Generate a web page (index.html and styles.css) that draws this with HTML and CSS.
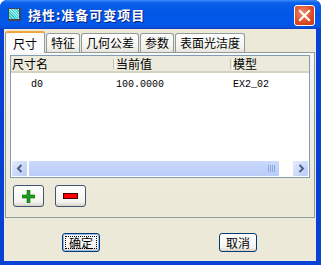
FILE: index.html
```html
<!DOCTYPE html>
<html lang="zh">
<head>
    <meta charset="UTF-8">
    <title>挠性:准备可变项目</title>
    <link rel="stylesheet" href="styles.css">
</head>
<body>

    <div class="window">
        <!-- Title bar -->
        <div class="titlebar">
            <span class="app-icon"></span>
            <span class="title">挠性:准备可变项目</span>
            <span class="close-btn">
                <svg width="13" height="13" viewBox="0 0 13 13">
                    <path d="M2 2 L11 11 M11 2 L2 11" stroke="#fff" stroke-width="2.2" stroke-linecap="square"/>
                </svg>
            </span>
        </div>

        <div class="frame">
            <!-- Tabs -->
            <div class="tabs">
                <div class="tab active">尺寸</div>
                <div class="tab">特征</div>
                <div class="tab">几何公差</div>
                <div class="tab">参数</div>
                <div class="tab">表面光洁度</div>
            </div>

            <div class="panel">
                <div class="list">
                    <div class="list-head">
                        <div class="col c1">尺寸名</div>
                        <div class="col c2"><span class="sep"></span>当前值</div>
                        <div class="col c3"><span class="sep"></span>模型</div>
                    </div>
                    <div class="list-row">
                        <div class="col c1 indent">d0</div>
                        <div class="col c2">100.0000</div>
                        <div class="col c3">EX2_02</div>
                    </div>
                    <div class="list-body"></div>
                    <div class="hscroll">
                        <div class="sb-btn">
                            <svg width="8" height="9" viewBox="0 0 8 9"><path d="M5.5 1 L2 4.5 L5.5 8" stroke="#4D6185" stroke-width="2" fill="none"/></svg>
                        </div>
                        <div class="sb-thumb"><span class="grip"></span></div>
                        <div class="sb-track"></div>
                        <div class="sb-btn">
                            <svg width="8" height="9" viewBox="0 0 8 9"><path d="M2.5 1 L6 4.5 L2.5 8" stroke="#4D6185" stroke-width="2" fill="none"/></svg>
                        </div>
                    </div>
                </div>

                <div class="tool-buttons">
                    <div class="btn icon-btn">
                        <svg width="13" height="13" viewBox="0 0 13 13">
                            <path d="M5 0h3v5h5v3H8v5H5V8H0V5h5z" fill="#1E9C1E"/>
                            <path d="M5 0h3v5h5v3H8v5H5V8H0V5h5z" fill="none" stroke="#0C6A0C" stroke-width="0.6"/>
                        </svg>
                    </div>
                    <div class="btn icon-btn">
                        <svg width="15" height="6" viewBox="0 0 15 6">
                            <rect x="0.5" y="0.5" width="14" height="5" fill="#F00" stroke="#400" stroke-width="1"/>
                        </svg>
                    </div>
                </div>
            </div>

            <div class="footer">
                <div class="btn text-btn default"><span class="focus">确定</span></div>
                <div class="btn text-btn">取消</div>
            </div>
        </div>
    </div>

</body>
</html>
```

FILE: styles.css
```css
/* Window frame */
body {
    margin: 0;
    padding: 0;
    background: #fff;
    font-family: "Noto Sans CJK SC", "Liberation Sans", sans-serif;
    font-size: 12px;
    color: #000;
}

.window {
    width: 321px;
    height: 265px;
    display: flex;
    flex-direction: column;
    background: #0842D4;
    border-radius: 7px 7px 0 0;
    overflow: hidden;
}

.titlebar {
    height: 29px;
    flex: none;
    display: flex;
    align-items: center;
    padding: 0 6px 0 8px;
    background: linear-gradient(#3C8CF8 0%, #0A5FEC 10%, #0156E6 45%, #0158EC 85%, #0A4ED6 95%, #0A3EC2 100%);
}

.app-icon {
    width: 10px;
    height: 10px;
    background: repeating-linear-gradient(45deg, #3CC 0 1px, #9EE 1px 2px);
    border: 1px solid #445;
    border-right-width: 2px;
    border-bottom-width: 2px;
    margin-right: 7px;
}

.title {
    flex: 1;
    color: #fff;
    font-weight: bold;
    font-size: 13px;
    letter-spacing: 1px;
    text-shadow: 1px 1px #0A1E7A;
}

.close-btn {
    width: 19px;
    height: 19px;
    border: 1px solid #fff;
    border-radius: 3px;
    background: radial-gradient(circle at 40% 35%, #F0896A, #DE4A22 60%, #C23A14);
    display: flex;
    align-items: center;
    justify-content: center;
    margin-top: 1px;
}

.frame {
    flex: 1;
    margin: 0 5px 4px 4px;
    background: #ECE9D8;
    display: flex;
    flex-direction: column;
    padding: 2px 1px 0 1px;
}

/* Tabs */
.tabs {
    display: flex;
    align-items: flex-end;
    height: 21px;
    padding-left: 2px;
    position: relative;
    z-index: 1;
}

.tab {
    height: 18px;
    line-height: 18px;
    padding: 0 4px;
    margin-right: 1px;
    border: 1px solid #919B9C;
    border-bottom: none;
    border-radius: 3px 3px 0 0;
    background: linear-gradient(#FEFEFE, #F4F3EE 70%, #E6E4DB);
    font-size: 12px;
}

.tab.active {
    height: 20px;
    line-height: 21px;
    margin-left: -2px;
    padding: 0 7px;
    background: #FCFCFE;
    border-top: 2px solid #F2A33A;
    border-radius: 3px 3px 0 0;
    margin-bottom: -1px;
}

.panel {
    height: 162px;
    border: 1px solid #919B9C;
    border-right-color: #8E9CA4;
    background: linear-gradient(#F8F8F4, #ECE9D8 85%);
    padding: 2px 4px 0 4px;
}

/* List view */
.list {
    height: 121px;
    border: 1px solid #7F9DB9;
    background: #fff;
    display: flex;
    flex-direction: column;
}

.list-head {
    height: 15px;
    display: flex;
    background: #EBEADB;
    border-bottom: 2px solid #D6D2C2;
    line-height: 15px;
}

.list-row {
    display: flex;
    height: 18px;
    line-height: 18px;
    margin-top: 3px;
    font-family: "Liberation Mono", monospace;
    font-size: 10px;
}

.col {
    position: relative;
    white-space: nowrap;
}

.c1 {
    width: 104px;
    padding-left: 1px;
}

.c2 {
    width: 117px;
}

.c3 {
    flex: 1;
}

.indent {
    padding-left: 20px;
    width: 85px;
}

.sep {
    position: absolute;
    left: -3px;
    top: 3px;
    width: 1px;
    height: 10px;
    border-left: 1px solid #C7C5B2;
    border-right: 1px solid #fff;
}

.list-body {
    flex: 1;
}

.hscroll {
    height: 17px;
    display: flex;
    background: #FEFEFB;
}

.sb-btn {
    width: 15px;
    height: 15px;
    border: 1px solid #fff;
    border-radius: 2px;
    background: linear-gradient(135deg, #E3EBFD, #BACBF7);
    display: flex;
    align-items: center;
    justify-content: center;
}

.sb-thumb {
    width: 250px;
    height: 15px;
    border: 1px solid #fff;
    border-radius: 2px;
    background: linear-gradient(#CAD9FB, #BACDF8);
    position: relative;
}

.grip {
    position: absolute;
    right: 4px;
    top: 4px;
    width: 7px;
    height: 7px;
    background: repeating-linear-gradient(90deg, #8DA7E0 0 1px, transparent 1px 2px);
}

.sb-track {
    flex: 1;
}

/* Buttons */
.btn {
    border: 1px solid #003C74;
    border-radius: 3px;
    background: linear-gradient(#FFFFFF, #F4F3EE 80%, #D6D0C5);
    display: flex;
    align-items: center;
    justify-content: center;
    box-sizing: border-box;
}

.tool-buttons {
    display: flex;
    gap: 11px;
    padding: 7px 0 0 3px;
}

.icon-btn {
    width: 31px;
    height: 22px;
    border-color: #3E5672;
}

.footer {
    flex: 1;
    display: flex;
    gap: 119px;
    padding: 15px 0 0 57px;
    align-items: flex-start;
}

.text-btn {
    width: 38px;
    height: 19px;
    font-size: 12px;
    line-height: 17px;
}

.text-btn.default {
    box-shadow: inset 0 0 0 1px #9DB7E8;
    padding: 2px;
}

.focus {
    flex: 1;
    align-self: stretch;
    border: 1px dotted #000;
    display: flex;
    align-items: center;
    justify-content: center;
    line-height: 13px;
}
```
